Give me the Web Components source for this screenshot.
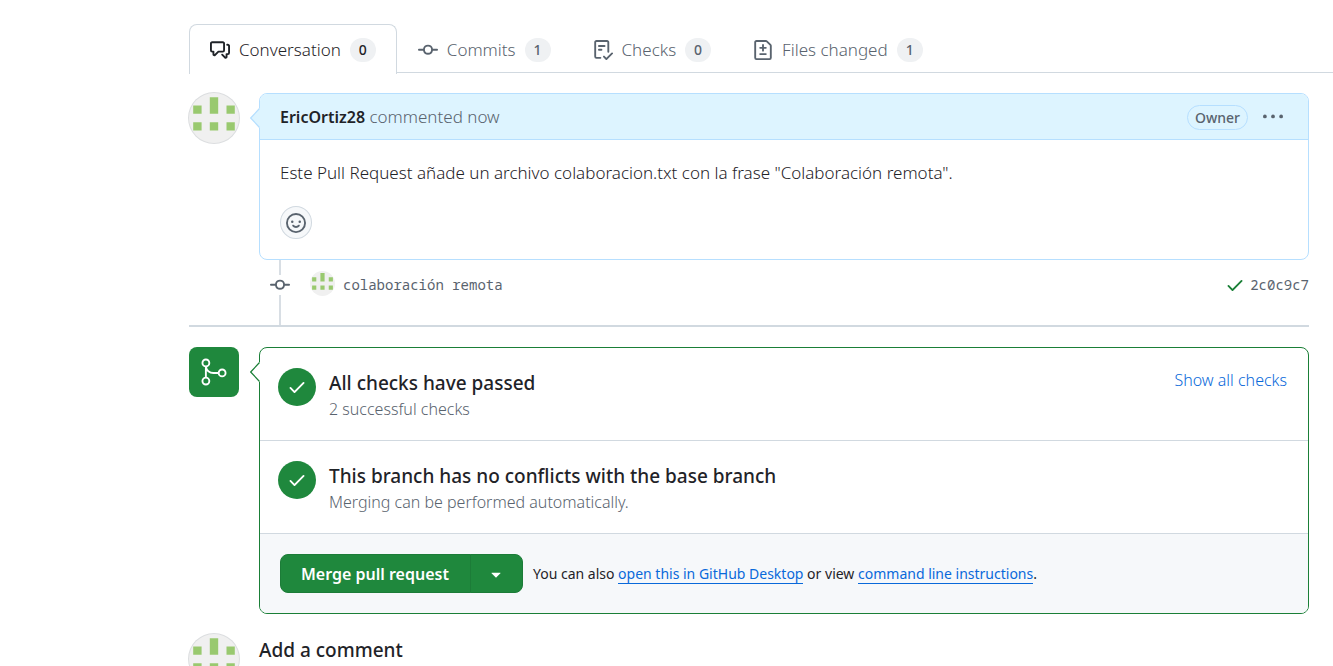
<!DOCTYPE html>
<html lang="en">
<head>
<meta charset="utf-8">
<title>Pull request</title>
<style>
  :root {
    --fg: #1f2328;
    --muted: #59636e;
    --border: #d1d9e0;
    --accent: #0969da;
    --blue-bg: #ddf4ff;
    --blue-border: #b6dfff;
    --green: #1f883d;
    --green-border: #1a7f37;
    --subtle: #f6f8fa;
  }
  body {
    margin: 0;
    background: #fff;
    color: var(--fg);
    font: 300 17px/26px "Noto Sans", "Open Sans", sans-serif;
  }
</style>
</head>
<body>
<pr-page></pr-page>

<script>
const icons = {
  discussion: '<path d="M1.75 1h8.5c.966 0 1.75.784 1.75 1.75v5.5A1.75 1.75 0 0 1 10.25 10H7.061l-2.574 2.573A1.458 1.458 0 0 1 2 11.543V10h-.25A1.75 1.75 0 0 1 0 8.25v-5.5C0 1.784.784 1 1.75 1ZM1.5 2.75v5.5c0 .138.112.25.25.25h1a.75.75 0 0 1 .75.75v2.19l2.72-2.72a.749.749 0 0 1 .53-.22h3.5a.25.25 0 0 0 .25-.25v-5.5a.25.25 0 0 0-.25-.25h-8.5a.25.25 0 0 0-.25.25Zm13 2a.25.25 0 0 0-.25-.25h-.5a.75.75 0 0 1 0-1.5h.5c.966 0 1.75.784 1.75 1.75v5.5A1.75 1.75 0 0 1 14.25 12H14v1.543a1.458 1.458 0 0 1-2.487 1.03L9.22 12.28a.749.749 0 0 1 .326-1.275.749.749 0 0 1 .734.215l2.22 2.22v-2.19a.75.75 0 0 1 .75-.75h1a.25.25 0 0 0 .25-.25Z"/>',
  commit: '<path d="M11.93 8.5a4.002 4.002 0 0 1-7.86 0H.75a.75.75 0 0 1 0-1.5h3.32a4.002 4.002 0 0 1 7.86 0h3.32a.75.75 0 0 1 0 1.5Zm-1.43-.75a2.5 2.5 0 1 0-5 0 2.5 2.5 0 0 0 5 0Z"/>',
  checklist: '<path d="M2.5 1.75v11.5c0 .138.112.25.25.25h3.17a.75.75 0 0 1 0 1.5H2.75A1.75 1.75 0 0 1 1 13.25V1.75C1 .784 1.784 0 2.75 0h8.5C12.216 0 13 .784 13 1.75v7.736a.75.75 0 0 1-1.5 0V1.75a.25.25 0 0 0-.25-.25h-8.5a.25.25 0 0 0-.25.25Zm13.274 9.537v-.001l-4.557 4.45a.75.75 0 0 1-1.055-.008l-1.943-1.95a.75.75 0 0 1 1.062-1.058l1.419 1.425 4.026-3.932a.75.75 0 1 1 1.048 1.074ZM4.75 4h4.5a.75.75 0 0 1 0 1.5h-4.5a.75.75 0 0 1 0-1.5ZM4 7.75A.75.75 0 0 1 4.75 7h2a.75.75 0 0 1 0 1.5h-2A.75.75 0 0 1 4 7.75Z"/>',
  diff: '<path d="M1 1.75C1 .784 1.784 0 2.75 0h7.586c.464 0 .909.184 1.237.513l2.914 2.914c.329.328.513.773.513 1.237v9.586A1.75 1.75 0 0 1 13.25 16H2.75A1.75 1.75 0 0 1 1 14.25Zm1.75-.25a.25.25 0 0 0-.25.25v12.5c0 .138.112.25.25.25h10.5a.25.25 0 0 0 .25-.25V4.664a.25.25 0 0 0-.073-.177l-2.914-2.914a.25.25 0 0 0-.177-.073ZM8 3.25a.75.75 0 0 1 .75.75v1.5h1.5a.75.75 0 0 1 0 1.5h-1.5v1.5a.75.75 0 0 1-1.5 0V7h-1.5a.75.75 0 0 1 0-1.5h1.5V4A.75.75 0 0 1 8 3.25Zm-3 8a.75.75 0 0 1 .75-.75h4.5a.75.75 0 0 1 0 1.5h-4.5a.75.75 0 0 1-.75-.75Z"/>',
  check: '<path d="M13.78 4.22a.75.75 0 0 1 0 1.06l-7.25 7.25a.75.75 0 0 1-1.06 0L2.22 9.28a.751.751 0 0 1 .018-1.042.751.751 0 0 1 1.042-.018L6 10.94l6.72-6.72a.75.75 0 0 1 1.06 0Z"/>',
  kebab: '<circle cx="1.5" cy="7.5" r="1.5"/><circle cx="8" cy="7.5" r="1.5"/><circle cx="14.5" cy="7.5" r="1.5"/>',
  smiley: '<circle cx="8" cy="8" r="7.25" fill="none" stroke="currentColor" stroke-width="1.5"/><circle cx="5" cy="7" r="1"/><circle cx="11" cy="7" r="1"/><path d="M5.75 10.1c1.1 1.5 3.4 1.5 4.5 0" fill="none" stroke="currentColor" stroke-width="1.5" stroke-linecap="round"/>',
  caret: '<path d="m4.427 7.427 3.396 3.396a.25.25 0 0 0 .354 0l3.396-3.396A.25.25 0 0 0 11.396 7H4.604a.25.25 0 0 0-.177.427Z"/>',
  merge: '<g transform="scale(.6667)" fill="none" stroke="currentColor" stroke-width="1.5"><circle cx="5.5" cy="4.75" r="2.75"/><circle cx="5.5" cy="19.25" r="2.75"/><circle cx="18.5" cy="12.75" r="2.75"/><path d="M5.5 7.5v9M5.5 7.5c.3 3.2 3 5.25 6 5.25h4.25"/></g>'
};

/* Base: each component gives its own styles and markup. */
class Part extends HTMLElement {
  connectedCallback() {
    if (this.shadowRoot) return;
    this.attachShadow({ mode: 'open' }).innerHTML =
      `<style>*{box-sizing:border-box}${this.css()}</style>${this.html()}`;
  }
}

customElements.define('pr-icon', class extends Part {
  css() { return `:host{display:block;flex:none;width:20px;height:20px}
    :host([size="30"]){width:30px;height:30px}
    svg{display:block;width:100%;height:100%;fill:currentColor}`; }
  html() { return `<svg viewBox="0 0 16 16" aria-hidden="true">${icons[this.getAttribute('name')]}</svg>`; }
});

customElements.define('pr-avatar', class extends Part {
  css() { return `:host{display:block;flex:none;width:50px;height:50px;border-radius:50%;overflow:hidden;background:#f0f0f0;box-shadow:0 0 0 1px #dcdee0}
    :host([small]){width:25px;height:25px;box-shadow:none}
    svg{display:block;width:100%;height:100%}`; }
  html() { return `<svg viewBox="0 0 50 50" role="img" aria-label="EricOrtiz28"><path fill="#99c96f" d="M20.8 4.2h8.400v16.600h-8.400zM4.200 12.500h8.400v8.300H4.200zM37.500 12.500h8.300v8.300h-8.300zM4.200 29.200h8.400v8.300H4.200zM20.800 29.200h8.400v8.300h-8.400zM37.500 29.200h8.300v8.300h-8.300z"/></svg>`; }
});

customElements.define('pr-tab', class extends Part {
  css() { return `:host{display:block;color:var(--muted)}
    a{display:flex;align-items:center;height:49px;padding:2px 20px 0;border:1px solid transparent;border-bottom:0;border-radius:8px 8px 0 0;color:inherit;text-decoration:none;white-space:nowrap}
    pr-icon{margin-right:9px}
    span{margin-left:9px;min-width:26px;height:24px;padding:0 8px;border-radius:24px;background:#eff1f3;font-size:14px;line-height:24px;font-weight:500;text-align:center}
    :host([selected]){color:var(--fg);margin-bottom:-1px}
    :host([selected]) a{height:50px;padding-bottom:1px;background:#fff;border-color:var(--border)}`; }
  html() { return `<a href="#${this.getAttribute('icon')}"><pr-icon name="${this.getAttribute('icon')}"></pr-icon><slot></slot><span>${this.getAttribute('count')}</span></a>`; }
});

customElements.define('pr-tabs', class extends Part {
  css() { return `:host{display:block}
    nav{display:flex;box-shadow:inset 0 -1px var(--border)}`; }
  html() { return `<nav aria-label="Pull request tabs"><slot></slot></nav>`; }
});

/* A left-hand mark and the box that it points to. */
customElements.define('pr-item', class extends Part {
  css() { return `:host{display:grid;grid-template-columns:50px minmax(0,1fr);column-gap:20px;align-items:start}
    .box{position:relative;border:1px solid var(--blue-border);border-radius:8px}
    svg{position:absolute;left:-10px;top:14px;width:10px;height:20px;fill:var(--blue-bg);stroke:var(--blue-border)}
    :host([tone=green]) .box{border-color:var(--green-border)}
    :host([tone=green]) svg{fill:#fff;stroke:var(--green-border)}`; }
  html() { return `<slot name="mark"></slot><div class="box"><slot></slot><svg viewBox="0 0 10 20" aria-hidden="true"><path stroke="none" d="M9.500 0 .500 10 9.500 20h.500V0z"/><path fill="none" stroke-width="1.2" d="M9.500.500.700 10l8.800 9.500"/></svg></div>`; }
});

customElements.define('pr-comment', class extends Part {
  css() { return `:host{display:block}
    header{display:flex;align-items:center;height:46px;padding:1px 20px 0;background:var(--blue-bg);border-bottom:1px solid var(--blue-border);border-radius:7px 7px 0 0;color:var(--muted)}
    h3{flex:1;margin:0;font-size:17px;font-weight:300}
    h3 a{color:var(--fg);font-size:16px;font-weight:600;text-decoration:none}
    .role{height:25px;padding:0 7px;border:1px solid var(--blue-border);border-radius:24px;font-size:14px;line-height:23px;font-weight:500}
    button{display:grid;place-items:center;padding:0;border:0;background:none;color:var(--muted)}
    .menu{margin:0 5px 0 15px}
    .body{padding:20px}
    p{margin:0 0 20px}
    .react{width:32px;height:33px;border:1px solid var(--border);border-radius:50%;background:var(--subtle)}`; }
  html() { return `<header><h3><a href="#author"><slot name="author"></slot></a> commented now</h3><span class="role">Owner</span>
    <button class="menu" type="button" aria-label="Show options"><pr-icon name="kebab"></pr-icon></button></header>
    <div class="body"><p><slot></slot></p><button class="react" type="button" aria-label="Add reaction"><pr-icon name="smiley"></pr-icon></button></div>`; }
});

customElements.define('pr-commit', class extends Part {
  css() { return `:host{display:block;padding-left:81px;border-bottom:2px solid var(--border)}
    .row{display:flex;align-items:center;height:65px;padding-bottom:15px;color:var(--muted);font:14px/20px "Noto Sans Mono","DejaVu Sans Mono",monospace}
    .dot{align-self:stretch;display:grid;place-items:center;width:20px;margin-right:20px;margin-bottom:-15px;padding-bottom:15px;background:linear-gradient(#d8dee4,#d8dee4) center/2px 100% no-repeat}
    .dot pr-icon{background:#fff}
    pr-avatar{margin:0 8px 4px 0}
    a{color:inherit;text-decoration:none}
    .ok{margin:0 5px 0 auto;color:var(--green-border)}`; }
  html() { return `<div class="row"><span class="dot"><pr-icon name="commit"></pr-icon></span><pr-avatar small></pr-avatar><a href="#commit"><slot></slot></a>
    <pr-icon class="ok" name="check"></pr-icon><a href="#sha">${this.getAttribute('sha')}</a></div>`; }
});

customElements.define('pr-status', class extends Part {
  css() { return `:host{display:flex;align-items:flex-start;height:93px;padding:20px 21px 0 18px;border-bottom:1px solid var(--border)}
    .disc{display:grid;place-items:center;flex:none;width:38px;height:38px;margin-right:13px;border-radius:50%;background:var(--green);color:#fff}
    .text{flex:1}
    h3{margin:0;font-size:19px;line-height:30px;font-weight:500}
    p{margin:0;font-size:16px;line-height:22px;color:var(--muted)}`; }
  html() { return `<span class="disc"><pr-icon name="check"></pr-icon></span><div class="text"><h3>${this.getAttribute('heading')}</h3><p>${this.getAttribute('detail')}</p></div><slot></slot>`; }
});

customElements.define('pr-merge-bar', class extends Part {
  css() { return `:host{display:flex;align-items:center;padding:20px;background:var(--subtle);border-radius:0 0 7px 7px;font-size:14px;font-weight:400}
    .group{display:flex;height:39px;margin-right:10px}
    button{border:1px solid #1c7c38;background:var(--green);color:#fff;font:600 16px/26px "Noto Sans","Open Sans",sans-serif}
    .go{padding:0 21px 0 20px;border-radius:8px 0 0 8px}
    .more{display:grid;place-items:center;width:53px;margin-left:-1px;padding:0;border-radius:0 8px 8px 0}
    a{color:var(--accent);text-decoration:none;box-shadow:0 1px var(--accent)}`; }
  html() { return `<div class="group"><button class="go" type="button">Merge pull request</button><button class="more" type="button" aria-label="Select merge method"><pr-icon name="caret"></pr-icon></button></div>
    <span>You can also <a href="#desktop">open this in GitHub Desktop</a> or view <a href="#cli">command line instructions</a>.</span>`; }
});

customElements.define('pr-page', class extends Part {
  css() { return `:host{display:block;padding:24px 0 0 189px}
    main{padding:20px 24px 0 0}
    .merge{display:grid;place-items:center;width:50px;height:50px;border-radius:8px;background:var(--green);color:#fff}
    .merge-item{margin:20px 0}
    .show{color:var(--accent);font-size:16px;line-height:24px;text-decoration:none}
    .add{display:flex;gap:20px}
    h2{margin:0;font-size:19px;line-height:32px;font-weight:500}`; }
  html() { return `
    <pr-tabs>
      <pr-tab selected icon="discussion" count="0">Conversation</pr-tab>
      <pr-tab icon="commit" count="1">Commits</pr-tab>
      <pr-tab icon="checklist" count="0">Checks</pr-tab>
      <pr-tab icon="diff" count="1">Files changed</pr-tab>
    </pr-tabs>
    <main>
      <pr-item>
        <pr-avatar slot="mark"></pr-avatar>
        <pr-comment><span slot="author">EricOrtiz28</span>Este Pull Request añade un archivo colaboracion.txt con la frase "Colaboración remota".</pr-comment>
      </pr-item>
      <pr-commit sha="2c0c9c7">colaboración remota</pr-commit>
      <pr-item tone="green" class="merge-item">
        <span slot="mark" class="merge"><pr-icon size="30" name="merge"></pr-icon></span>
        <pr-status heading="All checks have passed" detail="2 successful checks"><a class="show" href="#checks">Show all checks</a></pr-status>
        <pr-status heading="This branch has no conflicts with the base branch" detail="Merging can be performed automatically."></pr-status>
        <pr-merge-bar></pr-merge-bar>
      </pr-item>
      <section class="add"><pr-avatar></pr-avatar><h2>Add a comment</h2></section>
    </main>`; }
});
</script>
</body>
</html>
